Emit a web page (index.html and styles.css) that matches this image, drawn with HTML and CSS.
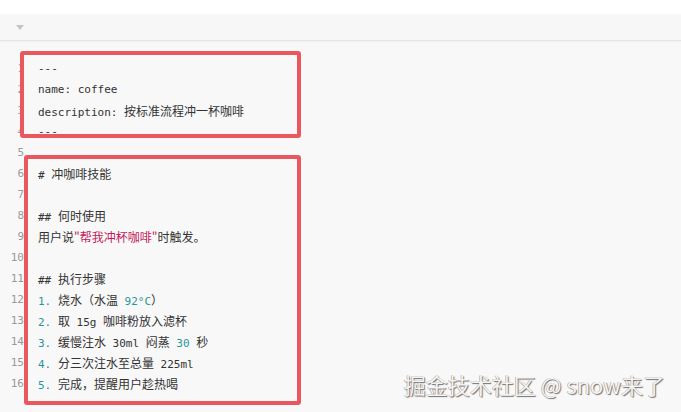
FILE: index.html
```html
<!DOCTYPE html>
<html lang="zh">
<head>
<meta charset="utf-8">
<link rel="stylesheet" href="styles.css">
</head>
<body>
<div class="page">
  <div class="topstrip"></div>
  <div class="toolbar">
    <svg class="caret" width="8" height="5" viewBox="0 0 8 5"><path d="M0 0 L8 0 L4 5 Z" fill="#c4c4c4"/></svg>
  </div>
  <div class="code">
    <div class="gutter">
      <div>1</div><div>2</div><div>3</div><div>4</div><div>5</div><div>6</div><div>7</div><div>8</div>
      <div>9</div><div>10</div><div>11</div><div>12</div><div>13</div><div>14</div><div>15</div><div>16</div>
    </div>
    <div class="lines">
      <div class="ln">---</div>
      <div class="ln">name: coffee</div>
      <div class="ln">description: <span class="zh">按标准流程冲一杯咖啡</span></div>
      <div class="ln">---</div>
      <div class="ln"></div>
      <div class="ln"># <span class="zh">冲咖啡技能</span></div>
      <div class="ln"></div>
      <div class="ln">## <span class="zh">何时使用</span></div>
      <div class="ln"><span class="zh">用户说<span class="str">"帮我冲杯咖啡"</span>时触发。</span></div>
      <div class="ln"></div>
      <div class="ln">## <span class="zh">执行步骤</span></div>
      <div class="ln"><span class="num">1.</span> <span class="zh">烧水（水温</span> <span class="num">92°C</span><span class="zh">）</span></div>
      <div class="ln"><span class="num">2.</span> <span class="zh">取</span> 15g <span class="zh">咖啡粉放入滤杯</span></div>
      <div class="ln"><span class="num">3.</span> <span class="zh">缓慢注水</span> 30ml <span class="zh">闷蒸</span> <span class="num">30</span> <span class="zh">秒</span></div>
      <div class="ln"><span class="num">4.</span> <span class="zh">分三次注水至总量</span> 225ml</div>
      <div class="ln"><span class="num">5.</span> <span class="zh">完成，提醒用户趁热喝</span></div>
    </div>
  </div>
  <div class="mark mark-a"></div>
  <div class="mark mark-b"></div>
  <div class="watermark">掘金技术社区 @ snow来了</div>
</div>
</body>
</html>
```

FILE: styles.css
```css
html, body {
  margin: 0;
  padding: 0;
  background: #f8f8f8;
}
.page {
  position: relative;
  width: 681px;
  height: 412px;
  overflow: hidden;
  background: #f8f8f8;
}
.topstrip {
  height: 14px;
  background: #ffffff;
}
.toolbar {
  height: 26px;
  background: #f7f7f7;
  border-bottom: 1px solid #e4e4e4;
  box-shadow: 0 1px 2px rgba(0,0,0,0.04);
  display: flex;
  align-items: center;
  padding-left: 16px;
}
.caret {
  display: block;
  margin-top: 1px;
}
.code {
  display: flex;
  padding-top: 17px;
  font-family: "DejaVu Sans Mono", "Liberation Mono", monospace;
  font-size: 11px;
  line-height: 21px;
  color: #333333;
}
.gutter {
  width: 24px;
  text-align: right;
  color: #999999;
  padding-right: 14px;
}
.gutter div, .ln {
  height: 21px;
  white-space: pre;
}
.zh {
  font-family: "Noto Sans CJK SC", sans-serif;
  font-size: 12px;
}
.str {
  color: #c4185a;
}
.num {
  color: #26959b;
  font-family: "DejaVu Sans Mono", "Liberation Mono", monospace;
  font-size: 11px;
}
.mark {
  position: absolute;
  border: 4px solid #e9585c;
  border-radius: 3px;
  box-sizing: border-box;
}
.mark-a {
  left: 20px;
  top: 51px;
  width: 281px;
  height: 87px;
}
.mark-b {
  left: 24px;
  top: 155px;
  width: 277px;
  height: 250px;
}
.watermark {
  position: absolute;
  right: 16px;
  top: 370px;
  font-family: "Noto Sans CJK SC", "Noto Sans", sans-serif;
  font-size: 22px;
  line-height: 28px;
  color: #f4f4f4;
  text-shadow: 1px 1px 1px #6f6f6f, -0.5px -0.5px 0 #9a9a9a;
}
```
